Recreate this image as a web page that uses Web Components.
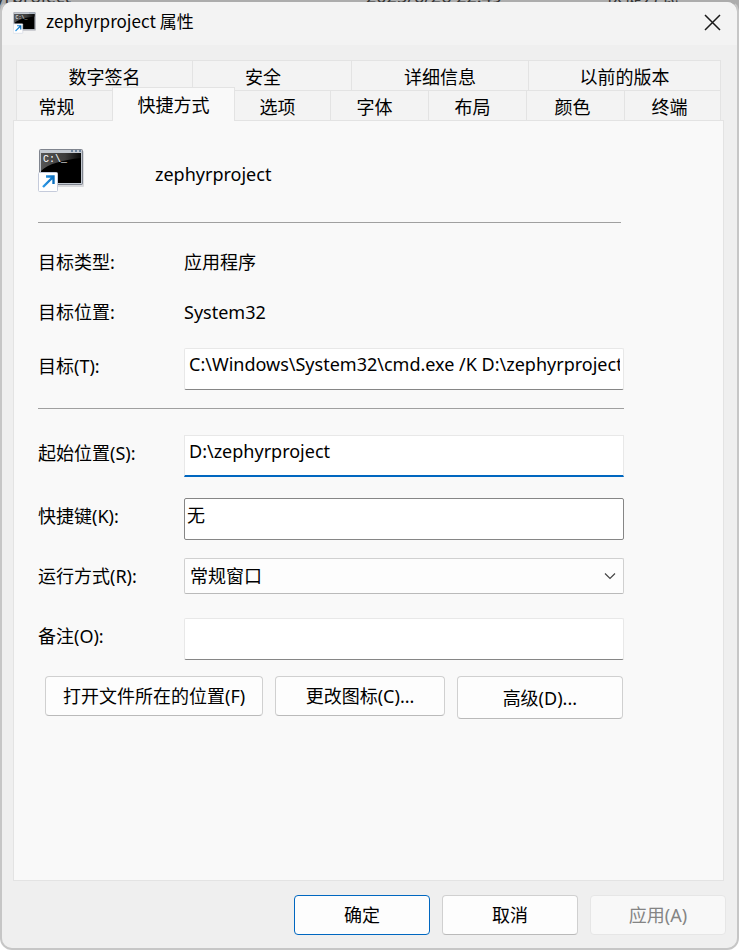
<!DOCTYPE html>
<html lang="zh-CN">
<head>
<meta charset="utf-8">
<meta name="viewport" content="width=device-width, initial-scale=1">
<title>zephyrproject 属性</title>
<style>
    body {
        margin: 0;
        background: #fff;
        color: #000;
        font: 18px/24px "Noto Sans", "Noto Sans CJK SC", sans-serif;
    }
</style>
</head>
<body>
<properties-page></properties-page>

<script>
const controlReset = `
    *, *::before, *::after { box-sizing: border-box; }
    button, input, select {
        margin: 0;
        color: inherit;
        font: inherit;
        outline: none;
    }
`;

// console window with the shortcut arrow in the corner
class ShortcutIcon extends HTMLElement {
    constructor() {
        super();
        this.attachShadow({ mode: 'open' }).innerHTML = `
            <style>
                :host { display: block; flex: none; width: 46px; height: 44px; }
                svg { display: block; width: 100%; height: 100%; }
                text { font: 10px "Liberation Mono", monospace; fill: #fff; }
            </style>
            <svg viewBox="0 0 46 44" aria-hidden="true">
                <defs>
                    <linearGradient id="shine" x1="0" y1="0" x2="1" y2="0">
                        <stop offset="0" stop-color="#555"/>
                        <stop offset=".6" stop-color="#3c3c3c"/>
                        <stop offset="1" stop-color="#080808"/>
                    </linearGradient>
                    <linearGradient id="arrow" x1="0" y1="0" x2="1" y2="0">
                        <stop offset="0" stop-color="#2f9be8"/>
                        <stop offset="1" stop-color="#0b6fbf"/>
                    </linearGradient>
                </defs>
                <rect x="2" y="2" width="44" height="36" rx="1" fill="#d9dadd"/>
                <rect x="1.5" y=".5" width="43" height="35" rx="1" fill="#c3c9d1" stroke="#80858f"/>
                <path d="M33 2h2M37 2h2M41 2h2" stroke="#56708f" stroke-width="1.5"/>
                <rect x="3" y="4" width="40" height="30" fill="#000"/>
                <path d="M3 4h40v5C24 11 10 15 3 22z" fill="url(#shine)"/>
                <text x="5" y="13">C:\\_</text>
                <rect x=".5" y="23.5" width="19" height="19" rx="1" fill="#fff" stroke="#c5cbdb"/>
                <path d="M5 38 15 28M8 27.500h7.500V35" fill="none" stroke="url(#arrow)" stroke-width="2.400"/>
            </svg>
        `;
    }
}

class WinButton extends HTMLElement {
    constructor() {
        super();
        this.attachShadow({ mode: 'open' }).innerHTML = `
            <style>
                ${controlReset}
                :host { display: block; height: 40px; }
                button {
                    display: block;
                    width: 100%;
                    height: 100%;
                    padding: 0;
                    border: 1px solid #d0d0d0;
                    border-bottom-color: #bababa;
                    border-radius: 4px;
                    background: #fdfdfd;
                    white-space: nowrap;
                }
                :host([primary]) button { border-color: #0067c0; }
                button:disabled {
                    border-color: #e6e6e6;
                    background: #f8f8f8;
                    color: #848484;
                }
            </style>
            <button type="button"><slot></slot></button>
        `;
        this.shadowRoot.querySelector('button').disabled = this.hasAttribute('disabled');
    }
}

// label with a plain value, a text box or a drop-down beside it
class PropertyField extends HTMLElement {
    connectedCallback() {
        const kind = this.getAttribute('kind');
        const value = this.getAttribute('value') || '';
        this.attachShadow({ mode: 'open' }).innerHTML = `
            <style>
                ${controlReset}
                :host {
                    display: grid;
                    grid-template-columns: 146px 1fr;
                    align-items: center;
                }
                .text-label { padding-bottom: 6px; }
                input {
                    width: 100%;
                    height: 42px;
                    padding: 0 3px 10px 4px;
                    border: 1px solid #e8e8e8;
                    border-bottom-color: #868686;
                    border-radius: 2px;
                    background: #fff;
                }
                :host([active]) input { border-bottom: 2px solid #0067c0; border-radius: 0; }
                :host([outlined]) input { padding-left: 2px; border-color: #868686; }
                .combo { display: grid; align-items: center; }
                .combo > * { grid-area: 1 / 1; }
                select {
                    appearance: none;
                    width: 100%;
                    height: 36px;
                    padding: 0 32px 0 5px;
                    border: 1px solid #d0d0d0;
                    border-bottom-color: #bababa;
                    border-radius: 2px;
                    background: #fdfdfd;
                }
                svg {
                    justify-self: end;
                    width: 12px;
                    height: 8px;
                    margin-right: 8px;
                    pointer-events: none;
                }
            </style>
            ${this.markup(kind)}
        `;
        const control = this.shadowRoot.querySelector('input');
        if (control) control.value = value;
    }

    markup(kind) {
        const label = this.getAttribute('label');
        if (kind === 'text') {
            return `<label class="text-label" for="control">${label}</label>
                <input id="control" type="text" spellcheck="false">`;
        }
        if (kind === 'select') {
            return `<label for="control">${label}</label>
                <div class="combo">
                    <select id="control"><option>${this.getAttribute('value')}</option></select>
                    <svg viewBox="0 0 12 8" aria-hidden="true">
                        <path d="M1 1.500 6 6.500 11 1.500" fill="none" stroke="#444" stroke-width="1.200"/>
                    </svg>
                </div>`;
        }
        return `<span>${label}</span><span>${this.getAttribute('value')}</span>`;
    }
}

class TabStrip extends HTMLElement {
    constructor() {
        super();
        this.attachShadow({ mode: 'open' }).innerHTML = `
            <style>
                ${controlReset}
                :host { display: block; padding: 0 3px; }
                .row { display: grid; }
                .back { grid-template-columns: 176fr 159fr 177fr 193fr; }
                .front { grid-template-columns: 96fr 122fr 96fr 98fr 98fr 98fr 97fr; }
                button {
                    height: 30px;
                    padding: 3px 0 0;
                    border: solid #e3e3e3;
                    border-width: 1px 0 0 1px;
                    background: #f3f3f3;
                    white-space: nowrap;
                }
                button:last-child { border-right-width: 1px; }
                .back button:nth-child(2) { padding-right: 18px; }
                .front button { padding-right: 16px; }
                .front button:nth-child(n+3) { padding-right: 10px; }
                .front button:nth-child(n+6) { padding-right: 6px; }
                .front button[aria-selected="true"] {
                    z-index: 1;
                    height: 34px;
                    margin: -3px -1px -1px 0;
                    padding: 0;
                    border-right-width: 1px;
                    background: #f9f9f9;
                }
            </style>
            <div role="tablist">
                <div class="row back" role="presentation">
                    <button role="tab" type="button">数字签名</button>
                    <button role="tab" type="button">安全</button>
                    <button role="tab" type="button">详细信息</button>
                    <button role="tab" type="button">以前的版本</button>
                </div>
                <div class="row front" role="presentation">
                    <button role="tab" type="button">常规</button>
                    <button role="tab" type="button" aria-selected="true">快捷方式</button>
                    <button role="tab" type="button">选项</button>
                    <button role="tab" type="button">字体</button>
                    <button role="tab" type="button">布局</button>
                    <button role="tab" type="button">颜色</button>
                    <button role="tab" type="button">终端</button>
                </div>
            </div>
        `;
    }
}

class ShortcutPanel extends HTMLElement {
    constructor() {
        super();
        this.attachShadow({ mode: 'open' }).innerHTML = `
            <style>
                ${controlReset}
                :host {
                    box-sizing: border-box;
                    display: block;
                    padding: 28px 99px 24px 24px;
                    border: 1px solid #e3e3e3;
                    background: #f9f9f9;
                }
                header { display: flex; align-items: center; gap: 71px; height: 44px; }
                header span { padding-top: 6px; }
                hr { height: 1px; margin: 0; border: 0; background: #a0a0a0; }
                header + hr { margin: 29px 3px 14px 0; }
                property-field { min-height: 50px; }
                property-field[kind] { min-height: 0; }
                .target { margin: 11px 0 18px; }
                .form { display: grid; padding-top: 26px; }
                .hotkey { margin-top: 21px; }
                .run { margin-top: 18px; }
                .comment { margin-top: 24px; }
                .actions {
                    display: grid;
                    grid-template-columns: 218fr 169fr 166fr;
                    align-items: start;
                    gap: 12px;
                    padding: 16px 1px 0 7px;
                }
                .advanced { height: 43px; }
            </style>
            <header><shortcut-icon></shortcut-icon><span>zephyrproject</span></header>
            <hr>
            <property-field label="目标类型:" value="应用程序"></property-field>
            <property-field label="目标位置:" value="System32"></property-field>
            <property-field class="target" kind="text" label="目标(T):" value="C:\\Windows\\System32\\cmd.exe /K D:\\zephyrproject"></property-field>
            <hr>
            <div class="form">
                <property-field kind="text" active label="起始位置(S):" value="D:\\zephyrproject"></property-field>
                <property-field class="hotkey" kind="text" outlined label="快捷键(K):" value="无"></property-field>
                <property-field class="run" kind="select" label="运行方式(R):" value="常规窗口"></property-field>
                <property-field class="comment" kind="text" label="备注(O):"></property-field>
            </div>
            <div class="actions">
                <win-button>打开文件所在的位置(F)</win-button>
                <win-button>更改图标(C)...</win-button>
                <win-button class="advanced">高级(D)...</win-button>
            </div>
        `;
    }
}

class DialogWindow extends HTMLElement {
    constructor() {
        super();
        this.attachShadow({ mode: 'open' }).innerHTML = `
            <style>
                ${controlReset}
                :host {
                    box-sizing: border-box;
                    display: flex;
                    flex-direction: column;
                    overflow: hidden;
                    border: 2px solid #c6c6c6;
                    border-top-color: transparent;
                    border-radius: 12px;
                    background: #efefef padding-box;
                }
                header {
                    display: flex;
                    align-items: center;
                    gap: 10px;
                    height: 43px;
                    padding: 0 16px 2px 11px;
                    background: #f3f3f3;
                }
                h1 {
                    flex: 1;
                    margin: 0;
                    padding-bottom: 4px;
                    font: 17px/24px "Noto Sans CJK SC", sans-serif;
                }
                shortcut-icon { width: 23px; height: 22px; }
                .close { display: flex; padding: 0; border: 0; background: none; }
                .close svg { width: 17px; height: 17px; }
                main { display: flex; flex: 1; flex-direction: column; padding: 15px 13px 0 11px; }
                ::slotted(shortcut-panel) { flex: 1; }
                footer {
                    display: grid;
                    grid-template-columns: repeat(3, 136px);
                    justify-content: end;
                    gap: 12px;
                    padding: 14px 11px 13px;
                }
            </style>
            <header>
                <shortcut-icon></shortcut-icon>
                <h1>${this.getAttribute('heading')}</h1>
                <button class="close" type="button" aria-label="关闭">
                    <svg viewBox="0 0 17 17" aria-hidden="true">
                        <path d="M1 1 16 16M16 1 1 16" stroke="#1a1a1a" stroke-width="1.500"/>
                    </svg>
                </button>
            </header>
            <main><slot></slot></main>
            <footer><slot name="footer"></slot></footer>
        `;
    }
}

class PropertiesPage extends HTMLElement {
    constructor() {
        super();
        this.attachShadow({ mode: 'open' }).innerHTML = `
            <style>
                :host { display: grid; min-height: 100vh; }
                .behind, dialog-window { grid-area: 1 / 1; }
                dialog-window { z-index: 1; }
                /* row of the file list that shows above the dialog */
                .behind {
                    display: grid;
                    grid-template-columns: 71fr 295fr 240fr 133fr;
                    height: 18px;
                    overflow: hidden;
                    background: #acacac;
                    color: #333;
                }
                .behind span { margin-top: -16px; white-space: nowrap; }
                .name { display: flex; justify-content: flex-end; min-width: 0; }
                .date { grid-column: 3; }
            </style>
            <div class="behind" aria-hidden="true">
                <div class="name"><span>zephyrproject</span></div>
                <span class="date">2025/6/26 22:49</span>
                <span>快捷方式</span>
            </div>
            <dialog-window heading="zephyrproject 属性">
                <tab-strip></tab-strip>
                <shortcut-panel></shortcut-panel>
                <win-button slot="footer" primary>确定</win-button>
                <win-button slot="footer">取消</win-button>
                <win-button slot="footer" disabled>应用(A)</win-button>
            </dialog-window>
        `;
    }
}

customElements.define('shortcut-icon', ShortcutIcon);
customElements.define('win-button', WinButton);
customElements.define('property-field', PropertyField);
customElements.define('tab-strip', TabStrip);
customElements.define('shortcut-panel', ShortcutPanel);
customElements.define('dialog-window', DialogWindow);
customElements.define('properties-page', PropertiesPage);
</script>
</body>
</html>
